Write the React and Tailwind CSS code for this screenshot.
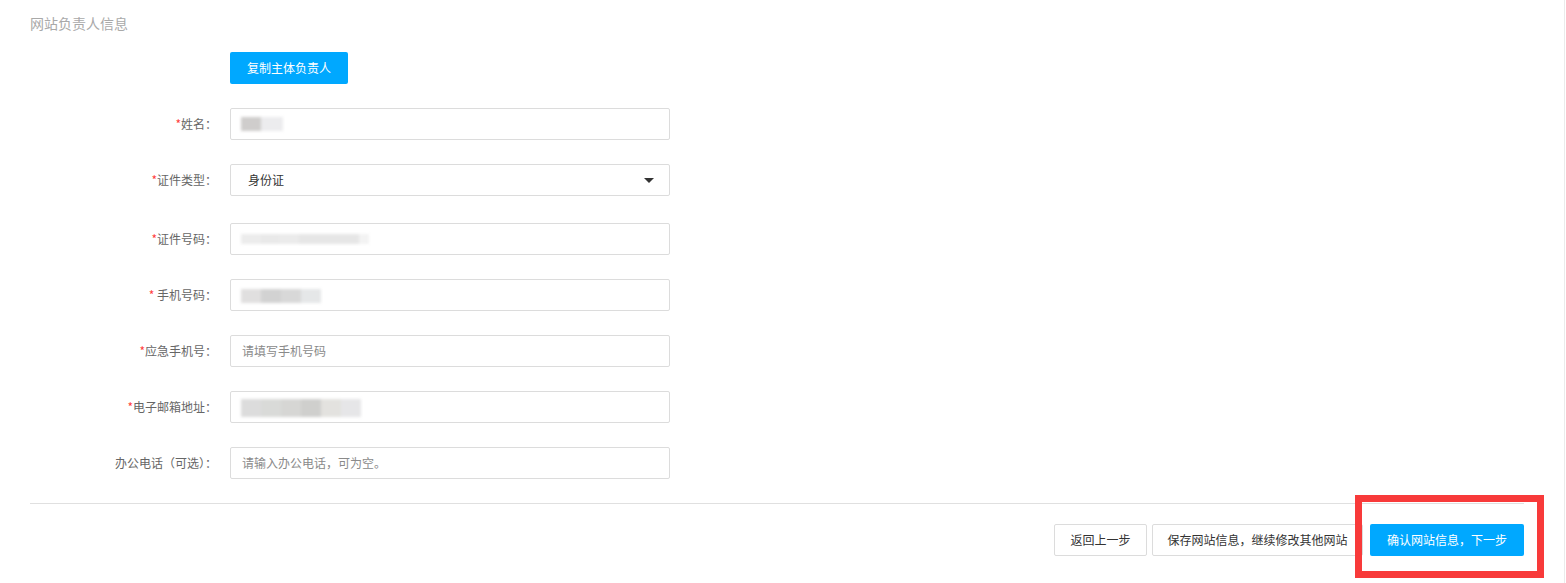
const font = { fontFamily: '"Microsoft YaHei", "Noto Sans CJK SC", "Liberation Sans", sans-serif' };

function Blur({ blocks, top = 0 }) {
  return (
    <div className="flex blur-[1.5px]" style={{ marginTop: top }}>
      {blocks.map(([w, h, c], i) => (
        <div key={i} style={{ width: w, height: h, background: c }} />
      ))}
    </div>
  );
}

function Row({ label, required, space, mt, children }) {
  return (
    <div className={`flex items-center h-8 ${mt}`}>
      <label className="w-[200px] pr-[13px] text-right text-[12px] text-[#666]">
        {required && <span className="text-[#ff4040]">*</span>}
        {space && " "}
        {label}
      </label>
      {children}
    </div>
  );
}

function Field({ children }) {
  return (
    <div className="w-[440px] h-8 border border-[#dcdcdc] rounded-[2px] bg-white flex items-center px-[10px] text-[12px]">
      {children}
    </div>
  );
}

export default function App() {
  return (
    <div className="min-h-[583px] bg-white" style={font}>
      <div className="mr-px min-h-[583px] border-r border-[#ebebeb] pl-[30px] pr-[40px]">
        <div className="pt-[13px] h-[33px] leading-5 text-[14px] text-[#a9a9a9]">网站负责人信息</div>

        <button className="ml-[200px] mt-[19px] w-[118px] h-8 bg-[#00a8ff] rounded-[2px] text-white text-[12px]">
          复制主体负责人
        </button>

        <Row label="姓名：" required mt="mt-[24px]">
          <Field>
            <Blur blocks={[[20, 14, "#cfcdcc"], [22, 14, "#ececee"]]} />
          </Field>
        </Row>

        <Row label="证件类型：" required mt="mt-[24px]">
          <div className="w-[440px] h-8 border border-[#dcdcdc] rounded-[2px] bg-white flex items-center justify-between pl-[17px] pr-[15px] text-[12px] text-[#333]">
            <span>身份证</span>
            <svg width="10" height="5" viewBox="0 0 10 5">
              <path d="M0 0h10L5 5z" fill="#333" />
            </svg>
          </div>
        </Row>

        <Row label="证件号码：" required mt="mt-[27px]">
          <Field>
            <Blur blocks={[[20, 10, "#ececec"], [18, 10, "#e9e9e9"], [20, 10, "#ebebeb"], [60, 10, "#e6e6e6"], [10, 10, "#f3f3f3"]]} />
          </Field>
        </Row>

        <Row label="手机号码：" required space mt="mt-[24px]">
          <Field>
            <Blur blocks={[[20, 14, "#e0dfdf"], [20, 14, "#d2d2d2"], [20, 14, "#d8d8d8"], [20, 14, "#e5e7e8"]]} top={2} />
          </Field>
        </Row>

        <Row label="应急手机号：" required mt="mt-[24px]">
          <Field>
            <span className="text-[#8a8a8a] pl-px">请填写手机号码</span>
          </Field>
        </Row>

        <Row label="电子邮箱地址：" required mt="mt-[24px]">
          <Field>
            <Blur blocks={[[20, 18, "#dcdcdc"], [20, 18, "#d9dad8"], [20, 18, "#d6d6d4"], [20, 18, "#cfcfcd"], [20, 18, "#e3e2df"], [20, 18, "#e6e6e8"]]} top={2} />
          </Field>
        </Row>

        <Row label="办公电话（可选）：" mt="mt-[24px]">
          <Field>
            <span className="text-[#8a8a8a] pl-px">请输入办公电话，可为空。</span>
          </Field>
        </Row>

        <div className="mt-[24px] border-t border-[#e0e0e0]" />

        <div className="flex justify-end mt-[20px] text-[12px]">
          <button className="w-[93px] h-8 border border-[#dcdcdc] rounded-[2px] bg-white text-[#333]">返回上一步</button>
          <button className="ml-[5px] w-[211px] h-8 border border-[#dcdcdc] rounded-[2px] bg-white text-[#333]">
            保存网站信息，继续修改其他网站
          </button>
          <div className="relative ml-[7px]">
            <button className="w-[154px] h-8 bg-[#00a8ff] rounded-[2px] text-white">确认网站信息，下一步</button>
            <div className="absolute left-[-15px] top-[-29px] w-[189px] h-[83px] border-[7px] border-[#f83a3a] pointer-events-none" />
          </div>
        </div>
      </div>
    </div>
  );
}
